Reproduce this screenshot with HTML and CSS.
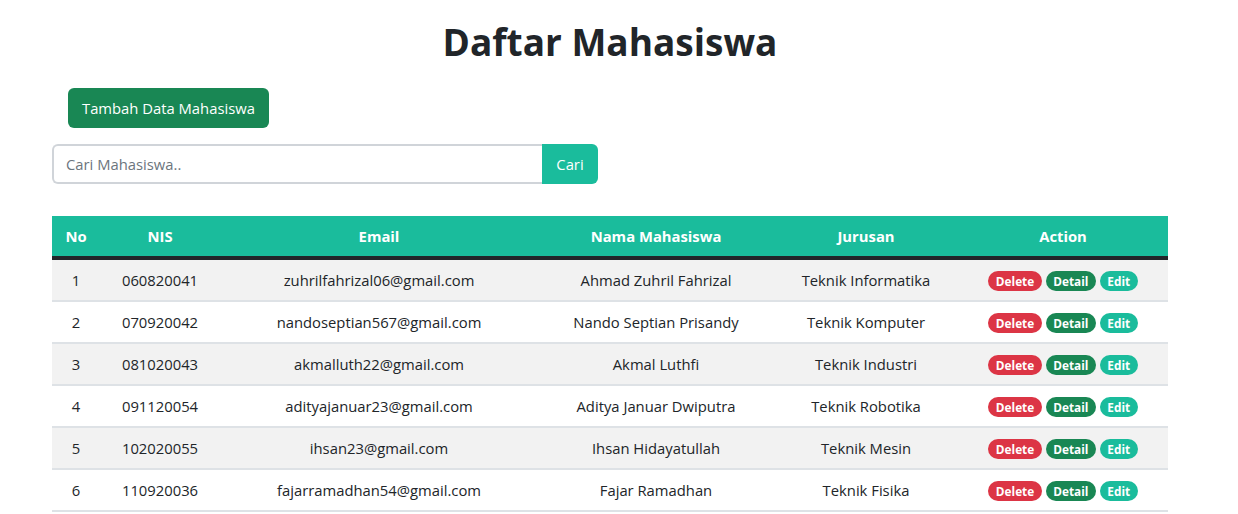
FILE: index.html
```html
<!DOCTYPE html>
<html lang="id">
<head>
<meta charset="utf-8">
<title>Daftar Mahasiswa</title>
<link rel="stylesheet" href="styles.css">
</head>
<body>
<div class="container">
  <h1 class="title">Daftar Mahasiswa</h1>
  <div class="add-row">
    <button class="btn-add" type="button">Tambah Data Mahasiswa</button>
  </div>
  <form class="search">
    <input class="search-input" type="text" placeholder="Cari Mahasiswa..">
    <button class="search-btn" type="button">Cari</button>
  </form>
  <table class="table">
    <thead>
      <tr>
        <th class="c-no">No</th>
        <th class="c-nis">NIS</th>
        <th class="c-email">Email</th>
        <th class="c-nama">Nama Mahasiswa</th>
        <th class="c-jur">Jurusan</th>
        <th class="c-act">Action</th>
      </tr>
    </thead>
    <tbody>
      <tr><td>1</td><td>060820041</td><td>zuhrilfahrizal06@gmail.com</td><td>Ahmad Zuhril Fahrizal</td><td>Teknik Informatika</td><td><span class="badge b-del">Delete</span><span class="badge b-det">Detail</span><span class="badge b-edit">Edit</span></td></tr>
      <tr><td>2</td><td>070920042</td><td>nandoseptian567@gmail.com</td><td>Nando Septian Prisandy</td><td>Teknik Komputer</td><td><span class="badge b-del">Delete</span><span class="badge b-det">Detail</span><span class="badge b-edit">Edit</span></td></tr>
      <tr><td>3</td><td>081020043</td><td>akmalluth22@gmail.com</td><td>Akmal Luthfi</td><td>Teknik Industri</td><td><span class="badge b-del">Delete</span><span class="badge b-det">Detail</span><span class="badge b-edit">Edit</span></td></tr>
      <tr><td>4</td><td>091120054</td><td>adityajanuar23@gmail.com</td><td>Aditya Januar Dwiputra</td><td>Teknik Robotika</td><td><span class="badge b-del">Delete</span><span class="badge b-det">Detail</span><span class="badge b-edit">Edit</span></td></tr>
      <tr><td>5</td><td>102020055</td><td>ihsan23@gmail.com</td><td>Ihsan Hidayatullah</td><td>Teknik Mesin</td><td><span class="badge b-del">Delete</span><span class="badge b-det">Detail</span><span class="badge b-edit">Edit</span></td></tr>
      <tr><td>6</td><td>110920036</td><td>fajarramadhan54@gmail.com</td><td>Fajar Ramadhan</td><td>Teknik Fisika</td><td><span class="badge b-del">Delete</span><span class="badge b-det">Detail</span><span class="badge b-edit">Edit</span></td></tr>
    </tbody>
  </table>
</div>
</body>
</html>
```
FILE: styles.css
```css
* { box-sizing: border-box; }
body {
  margin: 0;
  font-family: "Open Sans", "Noto Sans", sans-serif;
  font-size: 14.8px;
  color: #212529;
  background: #fff;
}
.container {
  width: 1116px;
  margin-left: 52px;
}
.title {
  margin: 18px 0 0;
  font-size: 37px;
  line-height: 48px;
  font-weight: 700;
  text-align: center;
  color: #212529;
}
.add-row {
  margin-top: 22px;
  padding-left: 16px;
}
.btn-add {
  height: 40px;
  padding: 0 14px;
  border: 0;
  border-radius: 6px;
  background: #198754;
  color: #fff;
  font: inherit;
}
.search {
  display: flex;
  margin: 16px 0 0;
  width: 546px;
}
.search-input {
  width: 490px;
  height: 40px;
  border: 2px solid #d0d4d9;
  border-right: 0;
  border-radius: 6px 0 0 6px;
  padding: 0 12px;
  font: inherit;
  color: #212529;
  outline: none;
}
.search-input::placeholder { color: #6c757d; }
.search-btn {
  width: 56px;
  height: 40px;
  border: 0;
  border-radius: 0 6px 6px 0;
  background: #1abc9c;
  color: #fff;
  font: inherit;
  padding: 0;
}
.table {
  margin-top: 32px;
  width: 1116px;
  border-collapse: separate;
  border-spacing: 0;
  table-layout: fixed;
}
.table th,
.table td {
  box-sizing: content-box;
  padding: 0;
  text-align: center;
  vertical-align: middle;
}
.table th {
  height: 40px;
  background: #1abc9c;
  color: #fff;
  font-weight: 700;
  border-bottom: 4px solid #212529;
}
.table td {
  height: 40px;
  border-bottom: 2px solid #dee2e6;
}
.table tbody tr:nth-child(odd) td { background: #f2f2f2; }
.c-no { width: 48px; }
.c-nis { width: 120px; }
.c-email { width: 318px; }
.c-nama { width: 236px; }
.c-jur { width: 184px; }
.c-act { width: 210px; }
.badge {
  display: inline-block;
  height: 20px;
  line-height: 20px;
  padding: 0 7.5px;
  margin: 0 2px;
  border-radius: 10px;
  color: #fff;
  font-size: 11.8px;
  font-weight: 700;
  vertical-align: middle;
}
.b-del { background: #dc3545; }
.b-det { background: #198754; }
.b-edit { background: #1abc9c; }
```
